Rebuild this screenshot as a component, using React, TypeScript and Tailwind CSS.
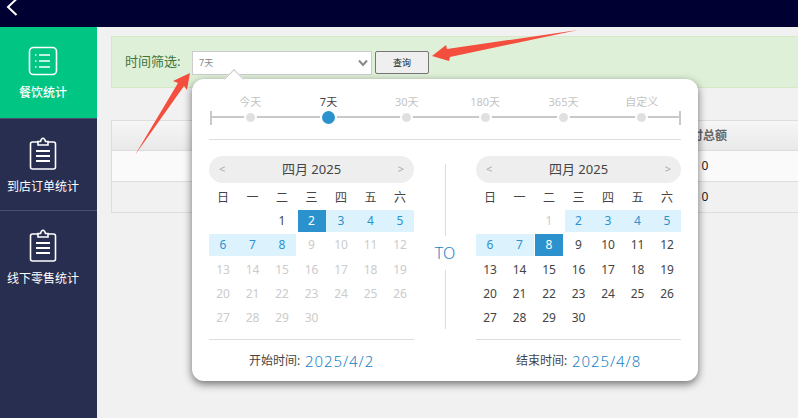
import React from 'react';

const FONT = '"Noto Sans", "Noto Sans CJK SC", sans-serif';
const WEEK = ['日', '一', '二', '三', '四', '五', '六'];
const SLIDER = ['今天', '7天', '30天', '180天', '365天', '自定义'];

function ListIcon() {
  return (
    <svg width="30" height="30" viewBox="0 0 30 30" fill="none" stroke="white" strokeWidth="1.6">
      <rect x="1.5" y="1.5" width="27" height="27" rx="4" />
      <path d="M11 9h11M11 15h11M11 21h11M7 9h1.500M7 15h1.500M7 21h1.500" />
    </svg>
  );
}

function ClipboardIcon() {
  return (
    <svg width="28" height="33" viewBox="0 0 28 33" fill="none" stroke="white" strokeWidth="1.6">
      <path d="M9 5H3.500A2 2 0 0 0 1.500 7v23a2 2 0 0 0 2 2h21a2 2 0 0 0 2-2V7a2 2 0 0 0-2-2H19" />
      <path d="M9 8V4.500h2.500C12 2.500 13 1.200 14 1.200s2 1.300 2.500 3.300H19V8z" />
      <path d="M7 14h14M7 19h14M7 24h14" strokeWidth="1.800" />
    </svg>
  );
}

function NavItem({ label, active, last, icon }: { label: string; active?: boolean; last?: boolean; icon: React.ReactNode }) {
  return (
    <div
      className={`flex h-[92px] flex-col items-center pr-[11px] text-[12px] text-white ${
        last ? '' : 'border-b border-[#4a5070]'
      } ${active ? 'bg-[#00c583] pt-[19px] font-medium' : 'bg-[#272e50] pt-[18px]'}`}
    >
      {icon}
      <span className="mt-[9px] whitespace-nowrap leading-[16px]">{label}</span>
    </div>
  );
}

type Tone = 'muted' | 'normal' | 'rangeFirst' | 'range' | 'picked';

function Calendar({ toneOf, footLabel, footValue }: { toneOf: (d: number) => Tone; footLabel: string; footValue: string }) {
  const days = Array.from({ length: 30 }, (_, i) => i + 1);
  const toneClass: Record<Tone, string> = {
    muted: 'text-[#ccc]',
    normal: 'text-[#444]',
    rangeFirst: 'bg-[#dcf2fd] text-[#2b92cd]',
    // the cells are 1.5px apart, the band runs on through the gap
    range: 'bg-[#dcf2fd] text-[#2b92cd] shadow-[-2px_0_0_#dcf2fd]',
    picked: 'relative bg-[#2b92cd] text-white',
  };
  return (
    <div className="w-[205px]">
      <div className="grid h-[27px] grid-cols-[auto_1fr_auto] items-center rounded-full bg-[#eeeeee] px-[10px] text-center text-[#444]">
        <span className="text-[11px] text-[#aaa]">&lt;</span>
        <span className="text-[13px]">四月 2025</span>
        <span className="text-[11px] text-[#aaa]">&gt;</span>
      </div>
      <div className="mt-[3px] grid h-[24px] grid-cols-[repeat(7,28px)] items-center gap-x-[1.500px] text-center text-[12px] text-[#444]">
        {WEEK.map((w) => (
          <span key={w}>{w}</span>
        ))}
      </div>
      <div className="grid grid-cols-[repeat(7,28px)] gap-x-[1.500px] gap-y-[2.250px] text-center text-[12px] leading-[22px]">
        <span />
        <span />
        {days.map((d) => (
          <span key={d} className={toneClass[toneOf(d)]}>
            {d}
          </span>
        ))}
      </div>
      <div className="mt-[10px] flex h-[43px] items-center justify-center gap-[5px] border-t border-[#ddd] text-[12px] text-[#444]">
        <span>{footLabel}:</span>
        <span className="text-[15px] font-light tracking-[0.900px] text-[#1a82c4]">{footValue}</span>
      </div>
    </div>
  );
}

function DatePopup() {
  return (
    <div className="absolute left-[192px] top-[79px] h-[302px] w-[506px] rounded-[12px] bg-white px-[17px] shadow-[0_3px_8px_rgba(0,0,0,0.55)]">
      <div className="absolute left-[35px] top-[-7px] h-[14px] w-[14px] rotate-45 border-l border-t border-[#ccc] bg-white" />
      <div className="relative h-[61px] border-b border-[#ddd] pl-[2px] pt-[15px]">
        <div className="absolute bottom-[21px] left-[1px] right-0 h-[2px] bg-[#c9c9c9]" />
        <div className="absolute bottom-[14px] left-[1px] h-[14px] w-[2px] bg-[#c9c9c9]" />
        <div className="absolute bottom-[14px] right-0 h-[14px] w-[2px] bg-[#c9c9c9]" />
        <div className="relative grid grid-cols-6 text-center text-[11px] leading-[16px]">
          {SLIDER.map((s) => {
            const on = s === '7天';
            return (
              <div key={s} className="flex flex-col items-center">
                <span className={on ? 'text-[#444]' : 'text-[#c4c4c4]'}>{s}</span>
                {on ? (
                  <span className="mt-[1px] h-[13px] w-[13px] rounded-full bg-[#2b92cd] ring-2 ring-white" />
                ) : (
                  <span className="mt-[3px] h-[9px] w-[9px] rounded-full bg-[#e0e0e0] ring-2 ring-white" />
                )}
              </div>
            );
          })}
        </div>
      </div>
      <div className="flex justify-between pt-[16px]">
        <Calendar
          toneOf={(d) => (d === 2 ? 'picked' : d === 1 ? 'normal' : d === 6 ? 'rangeFirst' : d <= 8 ? 'range' : 'muted')}
          footLabel="开始时间"
          footValue="2025/4/2"
        />
        <div className="flex flex-col items-center pt-[8px]">
          <div className="h-[72px] w-px bg-[#ddd]" />
          <span className="py-[9px] text-[16px] font-light leading-[16px] text-[#1a82c4]">TO</span>
          <div className="h-[59px] w-px bg-[#ddd]" />
        </div>
        <Calendar
          toneOf={(d) => (d === 8 ? 'picked' : d === 1 ? 'muted' : d === 2 || d === 6 ? 'rangeFirst' : d < 8 ? 'range' : 'normal')}
          footLabel="结束时间"
          footValue="2025/4/8"
        />
      </div>
    </div>
  );
}

export default function App() {
  return (
    <div className="relative h-[418px] w-[798px] overflow-hidden bg-[#f1f1f1]" style={{ fontFamily: FONT }}>
      <div className="flex h-[27px] items-start bg-[#000033] pl-[5px]">
        <svg width="14" height="16" viewBox="0 0 14 16" fill="none" stroke="white" strokeWidth="2">
          <path d="M11.500 -1 3 7l8.500 8" />
        </svg>
      </div>
      <div className="flex h-[391px]">
        <aside className="w-[97px] bg-[#272e50]">
          <NavItem label="餐饮统计" active icon={<ListIcon />} />
          <NavItem label="到店订单统计" icon={<ClipboardIcon />} />
          <NavItem label="线下零售统计" last icon={<ClipboardIcon />} />
        </aside>
        <main className="flex-1 pl-[14px] pt-[9px]">
          <div className="flex h-[52px] items-start border border-r-0 border-[#d6e9c6] bg-[#dff0d8] pl-[13px] pt-[14px]">
            <span className="w-[67px] text-[13px] leading-[20px] text-[#3c763d]">时间筛选:</span>
            <div className="flex h-[24px] w-[180px] items-center justify-between border border-[#ccc] bg-white pl-[6px] pr-[3px] text-[9px] text-[#888]">
              <span>7天</span>
              <svg width="10" height="8" viewBox="0 0 10 8" fill="none" stroke="#888" strokeWidth="2">
                <path d="M1 1.500 5 6l4-4.500" />
              </svg>
            </div>
            <button className="ml-[3px] h-[23px] w-[54px] rounded-[2px] border border-[#767676] bg-[#efefef] text-[9px] text-[#222]">
              查询
            </button>
          </div>
          <div className="mt-[32px] border border-r-0 border-[#ddd] text-[12px]">
            <div className="grid h-[30px] grid-cols-[1fr_190px] items-center border-b border-[#ddd] bg-gradient-to-b from-[#f6f6f6] to-[#e9e9e9] text-center font-bold text-[#666]">
              <span />
              <span>实付总额</span>
            </div>
            <div className="grid h-[31px] grid-cols-[1fr_190px] items-center border-b border-[#ddd] bg-[#fafafa] text-center text-[#222]">
              <span />
              <span className="pl-[4px]">0</span>
            </div>
            <div className="grid h-[30px] grid-cols-[1fr_190px] items-center text-center text-[#222]">
              <span />
              <span className="pl-[4px]">0</span>
            </div>
          </div>
        </main>
      </div>
      <DatePopup />
      <svg className="absolute left-0 top-0" width="798" height="418" fill="#f44e3f">
        <path d="M135 155 178 83 173 81 190 73 187 90 184 86z" />
        <path d="M578 30 447 49 446 45 432 56 449 61 450 57z" />
      </svg>
    </div>
  );
}
